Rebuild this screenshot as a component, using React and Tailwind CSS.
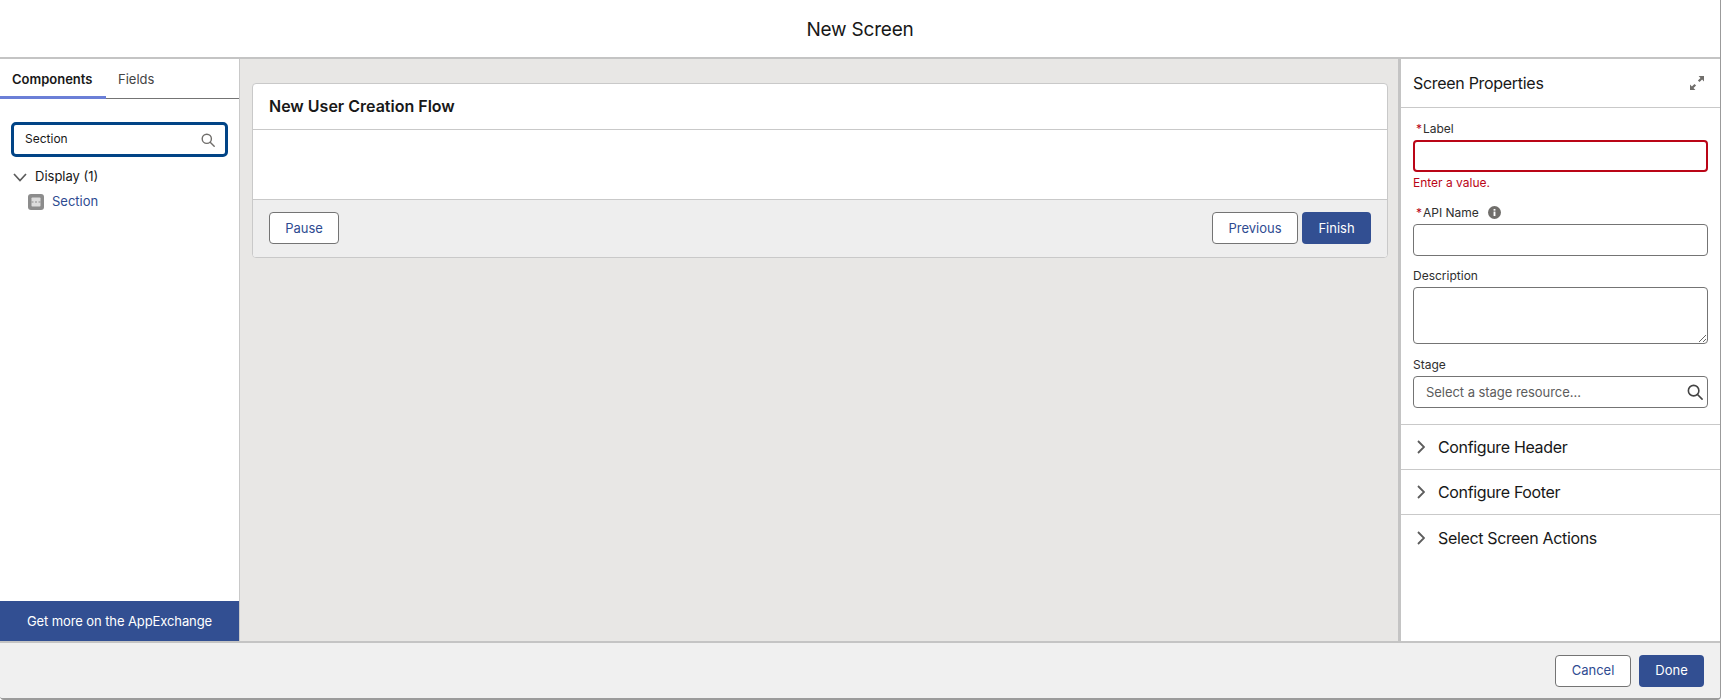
import { useState } from 'react'

function Field({ label, required, info, children, error, className }) {
  return (
    <div className={className}>
      <div className="flex items-center h-[17px] text-[12px] leading-[17px] text-[#2e2e2e]">
        {required && <span className="w-[7px] ml-[3px] text-[#ba0517]">*</span>}
        <span>{label}</span>
        {info && (
          <svg className="w-[13px] h-[13px] ml-[9px]" viewBox="0 0 14 14">
            <circle cx="7" cy="7" r="7" fill="#706e6b" />
            <rect x="6" y="6" width="2" height="4.8" fill="#fff" />
            <rect x="6" y="3.2" width="2" height="1.8" fill="#fff" />
          </svg>
        )}
      </div>
      {children}
      {error && <div className="mt-[2px] text-[12px] leading-[17px] text-[#ba0517]">{error}</div>}
    </div>
  )
}

function Section({ title, last }) {
  return (
    <div className={`flex items-center h-[45px] pl-[16px] text-[16px] tracking-[-0.35px] text-[#181818] ${last ? '' : 'border-b border-[#c9c9c9]'}`}>
      <svg className="w-[8px] h-[14px] mr-[13px]" viewBox="0 0 8 14" fill="none" stroke="#5c5c5c" strokeWidth="1.8">
        <path d="M1 1l6 6-6 6" />
      </svg>
      {title}
    </div>
  )
}

function SearchIcon({ className, color = '#706e6b' }) {
  return (
    <svg className={className} viewBox="0 0 14 14" fill="none" stroke={color} strokeWidth="1.4">
      <circle cx="5.8" cy="5.8" r="4.6" />
      <path d="M9.2 9.2l4 4" strokeLinecap="round" />
    </svg>
  )
}

export default function App() {
  const [tab, setTab] = useState('Components')

  return (
    <div className="w-[1721px] h-[700px] flex flex-col bg-white overflow-hidden font-['Inter',sans-serif] rounded-b-[4px] border-r border-b-2 border-[#9b9b9b]">
      <header className="h-[59px] shrink-0 flex items-center justify-center border-b-2 border-[#c4c4c4] text-[19px] tracking-[-0.2px] text-[#181818] pt-[3px]">
        New Screen
      </header>

      <div className="flex-1 flex min-h-0">
        <aside className="w-[240px] shrink-0 flex flex-col border-r border-[#c9c9c9]">
          <div className="flex h-[40px] border-b border-[#747474] text-[13px]">
            <button
              onClick={() => setTab('Components')}
              className="w-[106px] -mb-px border-b-[3px] border-[#6b7fd7] pl-[12px] pt-[4px] text-left font-semibold text-[#181818]"
            >
              Components
            </button>
            <button onClick={() => setTab('Fields')} className="ml-[12px] pt-[3px] text-[#444]">
              Fields
            </button>
          </div>

          <div className="mt-[23px] mx-[11px] h-[35px] flex items-center rounded-[5px] border-[3px] border-[#014486] pl-[11px] pr-[10px]">
            <span className="flex-1 text-[12px] text-[#181818] pb-[1px]">Section</span>
            <SearchIcon className="w-[14px] h-[14px]" />
          </div>

          <div className="flex items-center mt-[10px] h-[20px] pl-[13px] text-[13px] text-[#181818]">
            <svg className="w-[14px] h-[9px] mr-[8px]" viewBox="0 0 14 9" fill="none" stroke="#5c5c5c" strokeWidth="1.7">
              <path d="M1 1l6 6.5L13 1" />
            </svg>
            Display (1)
          </div>
          <div className="flex items-center mt-[5px] h-[20px] pl-[28px] text-[13px] text-[#2e4b91]">
            <span className="w-[16px] h-[16px] mr-[8px] rounded-[3px] bg-[#8c8c8c] flex items-center justify-center">
              <svg className="w-[12px] h-[12px]" viewBox="0 0 12 12">
                <rect x="1.5" y="1.5" width="9" height="9" rx="0.8" fill="#dcdcdc" />
                <path d="M1.5 6h2M5 6h2M8.5 6h2" stroke="#8c8c8c" strokeWidth="1" />
              </svg>
            </span>
            Section
          </div>

          <button className="mt-auto h-[40px] bg-[#324f92] text-white text-[13px] tracking-[-0.1px] pt-[1px]">
            Get more on the AppExchange
          </button>
        </aside>

        <main className="flex-1 min-w-0 bg-[#e8e7e5] pt-[24px] pl-[12px] pr-[10px]">
          <div className="rounded-[4px] border border-[#c9c9c9] bg-white overflow-hidden">
            <div className="h-[46px] flex items-center pl-[16px] pb-[1px] text-[16px] font-semibold text-[#181818] border-b border-[#c9c9c9]">
              New User Creation Flow
            </div>
            <div className="h-[69px]" />
            <div className="h-[58px] flex items-start justify-between px-[16px] pt-[12px] bg-[#eeeeee] border-t border-[#c9c9c9]">
              <button className="w-[70px] h-[32px] pt-[1px] rounded-[4px] border border-[#747474] bg-white text-[13px] text-[#2e4b91]">
                Pause
              </button>
              <div className="flex gap-[4px]">
                <button className="w-[86px] h-[32px] pt-[1px] rounded-[4px] border border-[#747474] bg-white text-[13px] text-[#2e4b91]">
                  Previous
                </button>
                <button className="w-[69px] h-[32px] pt-[1px] rounded-[4px] bg-[#324f92] text-[13px] text-white">
                  Finish
                </button>
              </div>
            </div>
          </div>
        </main>

        <aside className="w-[322px] shrink-0 border-l-[3px] border-[#c4c4c4]">
          <div className="h-[49px] flex items-center justify-between border-b border-[#c9c9c9] pl-[12px] pr-[16px] text-[16px] tracking-[-0.3px] text-[#181818]">
            Screen Properties
            <svg className="w-[14px] h-[14px]" viewBox="0 0 14 14" fill="#706e6b">
              <path d="M8.6 0H14v5.4l-1.9-1.9-2.6 2.6-1.6-1.6 2.6-2.6z" />
              <path d="M5.4 14H0V8.6l1.9 1.9 2.6-2.6 1.6 1.6-2.6 2.6z" />
            </svg>
          </div>

          <div className="px-[12px] pt-[12px] pb-[16px] border-b border-[#c9c9c9]">
            <Field label="Label" required error="Enter a value.">
              <div className="mt-[3px] h-[32px] rounded-[4px] border-2 border-[#ba0517] bg-white" />
            </Field>
            <Field label="API Name" required info className="mt-[13px]">
              <div className="mt-[3px] h-[32px] rounded-[4px] border border-[#747474] bg-white" />
            </Field>
            <Field label="Description" className="mt-[11px]">
              <textarea className="block mt-[3px] w-full h-[57px] rounded-[4px] border border-[#747474] bg-white outline-none" />
            </Field>
            <Field label="Stage" className="mt-[12px]">
              <div className="mt-[3px] h-[32px] flex items-center rounded-[4px] border border-[#747474] bg-white pl-[12px] pr-[4px]">
                <span className="flex-1 pt-[1px] text-[13px] tracking-[-0.05px] text-[#5c5c5c]">Select a stage resource...</span>
                <SearchIcon className="w-[16px] h-[16px]" color="#444" />
              </div>
            </Field>
          </div>

          <Section title="Configure Header" />
          <Section title="Configure Footer" />
          <Section title="Select Screen Actions" last />
        </aside>
      </div>

      <footer className="h-[57px] shrink-0 flex items-center justify-end gap-[8px] pr-[16px] bg-[#f0f0f0] border-t-2 border-[#c4c4c4]">
        <button className="w-[76px] h-[32px] rounded-[4px] border border-[#747474] bg-white text-[13px] text-[#2e4b91]">
          Cancel
        </button>
        <button className="w-[65px] h-[32px] rounded-[4px] bg-[#324f92] text-[13px] text-white">
          Done
        </button>
      </footer>
    </div>
  )
}
